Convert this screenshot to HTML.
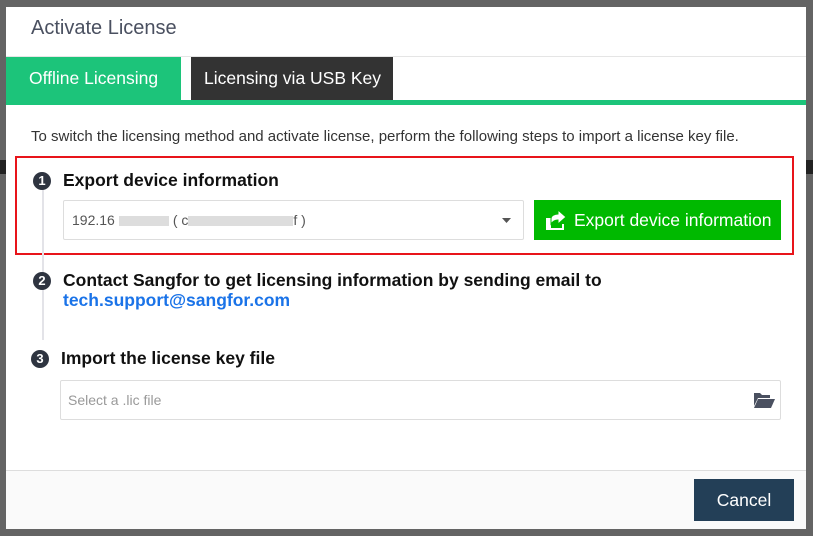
<!DOCTYPE html>
<html><head><style>
*{box-sizing:border-box;margin:0;padding:0}
body{width:813px;height:536px;background:#646464;font-family:"Liberation Sans",Arial,sans-serif;position:relative;overflow:hidden}
.m{position:absolute;left:6px;top:7px;width:800px;height:522px;background:#fff}
.a{position:absolute}
.title{left:25px;top:10px;font-size:20px;color:#4a5060}
.hl{left:0;top:49px;width:800px;height:1px;background:#e5e5e5}
.tab1{left:0;top:50px;width:175px;height:44px;background:#1cc47a;color:#fff;font-size:17.5px;line-height:42px;padding-left:23px}
.tab2{left:185px;top:50px;width:202px;height:44px;background:#333;color:#fff;font-size:17.5px;line-height:42px;padding-left:13px}
.bar{left:0;top:93px;width:800px;height:5px;background:#1cc47a}
.desc{left:25px;top:121px;font-size:15px;color:#333}
.red{left:9px;top:149px;width:779px;height:99px;border:2px solid #e8141a}
.vl{left:36px;top:183px;width:2px;height:150px;background:#e3e3e8}
.c{width:18px;height:18px;border-radius:50%;background:#2e3440;color:#fff;font-size:13px;font-weight:bold;text-align:center;line-height:18px}
.h{font-size:17.5px;font-weight:bold;color:#111}
.sel{left:57px;top:193px;width:461px;height:40px;border:1px solid #ddd;border-radius:2px;font-size:14px;color:#555;line-height:38px;padding-left:8px}
.btn{left:528px;top:193px;width:247px;height:40px;background:#00b900;color:#fff;font-size:17.5px;line-height:40px;padding-left:40px}
.inp{left:54px;top:373px;width:721px;height:40px;border:1px solid #ddd;border-radius:2px;font-size:14px;color:#999;line-height:38px;padding-left:7px}
.fl{left:0;top:463px;width:800px;height:1px;background:#ddd}
.ft{left:0;top:464px;width:800px;height:58px;background:#fafafa}
.cancel{left:688px;top:472px;width:100px;height:42px;background:#233f57;color:#fff;font-size:17.5px;line-height:42px;text-align:center}
.blur{display:inline-block;height:10px;background:#ddd;vertical-align:middle}
</style></head><body>
<div class="a" style="left:0;top:160px;width:6px;height:14px;background:#222"></div>
<div class="a" style="left:806px;top:160px;width:7px;height:14px;background:#222"></div>
<div class="m">
<div class="a title">Activate License</div>
<div class="a hl"></div>
<div class="a tab1">Offline Licensing</div>
<div class="a tab2">Licensing via USB Key</div>
<div class="a bar"></div>
<div class="a desc">To switch the licensing method and activate license, perform the following steps to import a license key file.</div>
<div class="a red"></div>
<div class="a vl"></div>
<div class="a c" style="left:27px;top:165px">1</div>
<div class="a h" style="left:57px;top:163px">Export device information</div>
<div class="a sel">192.16<span class="blur" style="width:50px;margin:0 4px"></span>( c<span class="blur" style="width:105px"></span>f )
<svg class="a" style="right:12px;top:17px" width="9" height="5"><path d="M0 0h9L4.5 5z" fill="#555"/></svg></div>
<div class="a btn"><svg class="a" style="left:11px;top:10px" width="22" height="20" viewBox="0 0 22 20"><path d="M1 8h5v10h11v-4l2 0v6H1z" fill="#fff"/><path d="M6 14V9c0-3 3-5 7-5V0l8 7-8 7v-4c-3 0-5 1-7 4z" fill="#fff" stroke="#00b900" stroke-width="1"/></svg>Export device information</div>
<div class="a c" style="left:27px;top:265px">2</div>
<div class="a h" style="left:57px;top:263px">Contact Sangfor to get licensing information by sending email to</div>
<div class="a h" style="left:57px;top:283px;color:#1a73e8">tech.support@sangfor.com</div>
<div class="a c" style="left:25px;top:343px">3</div>
<div class="a h" style="left:55px;top:341px">Import the license key file</div>
<div class="a inp">Select a .lic file
<svg class="a" style="right:5px;top:10px" width="21" height="18" viewBox="0 0 21 18"><path d="M0 2h6l2 2h8v3H4L0 15z" fill="#4a5060"/><path d="M4 8h17l-4 9H0z" fill="#4a5060"/></svg></div>
<div class="a fl"></div>
<div class="a ft"></div>
<div class="a cancel">Cancel</div>
</div>
</body></html>
